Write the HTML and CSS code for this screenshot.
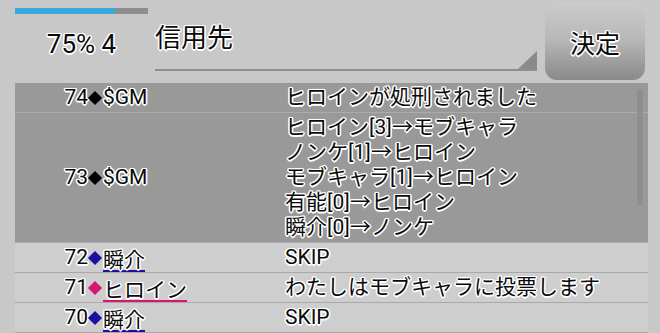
FILE: index.html
```html
<!DOCTYPE html>
<html lang="ja">
<head>
    <meta charset="UTF-8">
    <title>投票ログ</title>
    <link rel="stylesheet" href="styles.css">
</head>
<body>
    <div class="top">
        <div class="status">
            <div class="progress"><div class="progress-fill" style="width: 75%"></div></div>
            <div class="status-text">75% 4</div>
        </div>
        <div class="select">
            <span class="select-text">信用先</span>
        </div>
        <button class="btn-decide">決定</button>
    </div>

    <div class="log">
        <div class="row row-dark">
            <div class="who"><span class="num">74</span><span class="dia dia-black"></span><span class="name">$GM</span></div>
            <div class="msg">ヒロインが処刑されました</div>
        </div>
        <div class="row row-dark">
            <div class="who"><span class="num">73</span><span class="dia dia-black"></span><span class="name">$GM</span></div>
            <div class="msg">ヒロイン[3]→モブキャラ<br>ノンケ[1]→ヒロイン<br>モブキャラ[1]→ヒロイン<br>有能[0]→ヒロイン<br>瞬介[0]→ノンケ</div>
        </div>
        <div class="row">
            <div class="who"><span class="num">72</span><span class="dia dia-blue"></span><span class="name name-blue">瞬介</span></div>
            <div class="msg">SKIP</div>
        </div>
        <div class="row">
            <div class="who"><span class="num">71</span><span class="dia dia-pink"></span><span class="name name-pink">ヒロイン</span></div>
            <div class="msg">わたしはモブキャラに投票します</div>
        </div>
        <div class="row">
            <div class="who"><span class="num">70</span><span class="dia dia-blue"></span><span class="name name-blue">瞬介</span></div>
            <div class="msg">SKIP</div>
        </div>
        <div class="scrollbar"></div>
    </div>
</body>
</html>
```

FILE: styles.css
```css
/* 全体 */
body {
    margin: 0;
    background-color: #c8c8c8;
    font-family: Roboto, "Noto Sans CJK JP", sans-serif;
    color: #0a0a0a;
    overflow: hidden;
    text-shadow: 0 0 2px #fff, 1px 0 0 #fff, -1px 0 0 #fff, 0 1px 0 #fff, 0 -1px 0 #fff,
        1px 1px 0 #fff, -1px -1px 0 #fff, 1px -1px 0 #fff, -1px 1px 0 #fff,
        1.5px 0 0 #fff, -1.5px 0 0 #fff, 0 1.5px 0 #fff, 0 -1.5px 0 #fff;
}

/* 上部バー */
.top {
    display: flex;
    height: 83px;
    padding-left: 15px;
}

.status {
    width: 133px;
    padding-top: 8px;
}

.progress {
    height: 6px;
    background-color: #8e8e8e;
}

.progress-fill {
    height: 100%;
    background-color: #3aa8da;
}

.status-text {
    margin-top: 14px;
    text-align: center;
    font-size: 26px;
    line-height: 32px;
}

.select {
    position: relative;
    width: 382px;
    height: 69px;
    margin-left: 7px;
    border-bottom: 2px solid #8e8e8e;
}

.select::after {
    content: "";
    position: absolute;
    right: 0;
    bottom: 0;
    width: 19px;
    height: 18px;
    background-color: #8a8a8a;
    clip-path: polygon(100% 0, 100% 100%, 0 100%);
}

.select-text {
    display: block;
    padding-top: 20px;
    font-size: 26px;
    line-height: 32px;
    font-family: "Noto Sans CJK JP", sans-serif;
}

.btn-decide {
    width: 100px;
    height: 77px;
    margin: 3px 0 0 8px;
    border: none;
    border-radius: 12px;
    background: linear-gradient(#cbcbcb 0%, #b9b9b9 45%, #8a8a8a 100%);
    font-family: "Noto Sans CJK JP", sans-serif;
    font-size: 25px;
    color: #0a0a0a;
    text-shadow: inherit;
    padding: 0;
}

/* ログ一覧 */
.log {
    position: relative;
    margin-left: 15px;
    width: 633px;
}

.row {
    display: flex;
    align-items: center;
    padding: 2px 0;
    background-color: #cecece;
    border-bottom: 1px solid #a9a9a9;
    font-size: 21px;
    line-height: 25px;
}

.row-dark {
    background-color: #999;
    border-bottom-color: #acacac;
}

.who {
    display: flex;
    align-items: center;
    width: 270px;
}

.num {
    width: 73px;
    text-align: right;
}

.dia {
    width: 10px;
    height: 10px;
    margin: 0 3px 0 2px;
    transform: rotate(45deg);
}

.dia-black { background-color: #000; }
.dia-blue { background-color: #1c0f9e; }
.dia-pink { background-color: #d81670; }

.name-blue,
.name-pink {
    font-family: "Noto Sans CJK JP", sans-serif;
    border-bottom: 2px solid;
    line-height: 24px;
    margin-bottom: -2px;
}

.name-blue { border-color: #1c0f9e; }
.name-pink { border-color: #d81670; }

.msg {
    font-family: Roboto, "Noto Sans CJK JP", sans-serif;
}

.scrollbar {
    position: absolute;
    left: 622px;
    top: 6px;
    width: 6px;
    height: 116px;
    background-color: #8e8e8e;
}
```
